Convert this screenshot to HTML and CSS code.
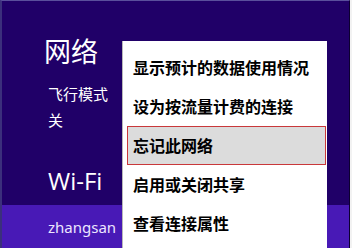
FILE: index.html
```html
<!DOCTYPE html>
<html lang="zh-CN">
<head>
    <meta charset="UTF-8">
    <title>网络</title>
    <link rel="stylesheet" href="styles.css">
</head>
<body>

<div class="screen">
    <div class="panel">
        <h1 class="title">网络</h1>
        <div class="mode-label">飞行模式</div>
        <div class="mode-value">关</div>
        <h2 class="section">Wi-Fi</h2>
        <div class="network selected">zhangsan</div>
    </div>

    <ul class="menu">
        <li>显示预计的数据使用情况</li>
        <li>设为按流量计费的连接</li>
        <li class="hover">忘记此网络</li>
        <li>启用或关闭共享</li>
        <li>查看连接属性</li>
    </ul>
</div>

</body>
</html>
```

FILE: styles.css
```css
body {
    margin: 0;
    padding: 0;
    background-color: #f2f2f2;
    font-family: "Noto Sans CJK SC", "Noto Sans", sans-serif;
}
.screen {
    position: relative;
    width: 352px;
    height: 248px;
    overflow: hidden;
}
.panel {
    box-sizing: border-box;
    width: 350px;
    height: 248px;
    background-color: #200068;
    border-top: 1px solid #5a4f9c;
    border-left: 2px solid #3b2f7c;
    border-right: 1px solid #0c0030;
    color: #fff;
    display: flex;
    flex-direction: column;
}
.title {
    margin: 32px 0 0 42px;
    font-size: 27px;
    font-weight: normal;
    line-height: 36px;
}
.mode-label {
    margin: 15px 0 0 46px;
    font-size: 15px;
    line-height: 20px;
}
.mode-value {
    margin: 6px 0 0 46px;
    font-size: 15px;
    line-height: 20px;
}
.section {
    margin: 36px 0 0 46px;
    font-family: "Open Sans", "Noto Sans", sans-serif;
    font-size: 24px;
    font-weight: normal;
    line-height: 30px;
}
.network {
    margin-top: 9px;
    padding-left: 46px;
    height: 44px;
    line-height: 44px;
    font-family: "Noto Sans", sans-serif;
    font-size: 15px;
}
.network.selected {
    background-color: #4819b6;
    color: #ece6ff;
}
.menu {
    position: absolute;
    left: 122px;
    top: 41px;
    width: 205px;
    height: 220px;
    box-sizing: border-box;
    margin: 0;
    padding: 7px 1px 0 4px;
    list-style: none;
    background-color: #fff;
    border-left: 1px solid #b8b8b8;
}
.menu li {
    box-sizing: border-box;
    height: 39px;
    line-height: 37px;
    padding-left: 5px;
    border: 1px solid transparent;
    font-size: 16px;
    font-weight: bold;
    color: #000;
    white-space: nowrap;
}
.menu li.hover {
    background-color: #dcdcdc;
    border-color: #c9383a;
}
```
